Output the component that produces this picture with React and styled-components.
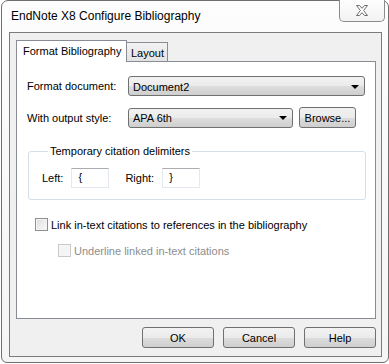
import React from 'react';
import styled, { createGlobalStyle } from 'styled-components';

const GlobalStyle = createGlobalStyle`
  html, body {
    margin: 0;
    padding: 0;
    background: #ffffff;
  }
  body {
    font-family: "Liberation Sans", Arial, sans-serif;
    font-size: 11px;
    color: #000;
  }
`;

const Window = styled.div`
  width: 386px;
  height: 361px;
  margin-left: 1px;
  border: 1px solid #6f6f6f;
  border-radius: 7px 7px 6px 6px;
  background: linear-gradient(#fdfdfd, #f5f5f5);
  display: flex;
  flex-direction: column;
  box-sizing: content-box;
`;

const TitleBar = styled.div`
  height: 31px;
  display: flex;
  justify-content: space-between;
  align-items: flex-start;
  padding: 0 3px 0 9px;
`;

const Title = styled.div`
  font-size: 12px;
  line-height: 31px;
`;

const CloseButton = styled.div`
  width: 44px;
  height: 21px;
  margin-top: -1px;
  border: 1px solid #8c8c8c;
  border-top: none;
  border-radius: 0 0 5px 5px;
  background: linear-gradient(#fefefe, #f2f2f2);
  display: flex;
  align-items: center;
  justify-content: center;
`;

const Client = styled.div`
  flex: 1;
  margin: 0 6px 5px 7px;
  border: 1px solid #7b7b7b;
  background: #f0f0f0;
  display: flex;
  flex-direction: column;
  padding: 7px 5px 8px 6px;
`;

const TabRow = styled.div`
  display: flex;
  align-items: flex-end;
  position: relative;
  z-index: 1;
  margin-bottom: -1px;
`;

const Tab = styled.div`
  box-sizing: border-box;
  border: 1px solid #898c95;
  border-bottom: ${(p) => (p.$active ? 'none' : '1px solid #898c95')};
  height: ${(p) => (p.$active ? '22px' : '20px')};
  width: ${(p) => (p.$active ? '111px' : '42px')};
  padding: ${(p) => (p.$active ? '4px 0 0 6px' : '4px 0 0 4px')};
  background: ${(p) => (p.$active ? '#ffffff' : 'linear-gradient(#f2f2f2, #e3e3e3)')};
  margin-left: ${(p) => (p.$active ? '0' : '-1px')};
  line-height: 13px;
  ${(p) => (p.$active ? '' : 'margin-top: 2px;')}
`;

const Panel = styled.div`
  flex: 1;
  border: 1px solid #898c95;
  background: #ffffff;
  padding: 14px 10px 0 10px;
`;

const FormGrid = styled.div`
  display: grid;
  grid-template-columns: 101px auto;
  row-gap: 11px;
  align-items: center;
`;

const ControlLine = styled.div`
  display: flex;
  align-items: center;
  gap: 6px;
`;

const Combo = styled.div`
  box-sizing: border-box;
  width: ${(p) => p.$width}px;
  height: 20px;
  border: 1px solid #707070;
  border-radius: 3px;
  background: linear-gradient(#f2f2f2 0%, #ebebeb 50%, #dddddd 51%, #cfcfcf 100%);
  display: flex;
  align-items: center;
  justify-content: space-between;
  padding: 1px 5px 0 4px;
`;

const Arrow = styled.span`
  width: 0;
  height: 0;
  border-left: 4px solid transparent;
  border-right: 4px solid transparent;
  border-top: 4px solid #000;
`;

const Button = styled.div`
  box-sizing: border-box;
  width: ${(p) => p.$width || 72}px;
  height: 21px;
  border: 1px solid #707070;
  border-radius: 3px;
  background: linear-gradient(#f2f2f2 0%, #ebebeb 50%, #dddddd 51%, #cfcfcf 100%);
  display: flex;
  align-items: center;
  justify-content: center;
  padding-top: 1px;
`;

const Group = styled.fieldset`
  margin: 17px 0 0 1px;
  width: 338px;
  box-sizing: border-box;
  border: 1px solid #d5dfe5;
  border-radius: 3px;
  padding: 11px 0 11px 13px;
  display: flex;
  align-items: center;
`;

const Legend = styled.legend`
  margin-left: 6px;
  padding: 0 2px;
  font-size: 11px;
`;

const DelimLabel = styled.span`
  margin-right: ${(p) => p.$gap}px;
`;

const TextBox = styled.div`
  box-sizing: border-box;
  width: 38px;
  height: 20px;
  border: 1px solid #e3e9ef;
  border-top-color: #abadb3;
  background: #fff;
  padding: 2px 0 0 6px;
  margin-right: ${(p) => p.$after || 0}px;
`;

const CheckRow = styled.div`
  display: flex;
  align-items: center;
  margin-left: ${(p) => p.$indent}px;
  margin-top: ${(p) => p.$top}px;
  color: ${(p) => (p.$disabled ? '#8d8d8d' : '#000')};
`;

const Box = styled.span`
  box-sizing: border-box;
  width: 13px;
  height: 13px;
  border: 1px solid ${(p) => (p.$disabled ? '#c8c8c8' : '#8e8f8f')};
  background: ${(p) =>
    p.$disabled
      ? '#f4f4f4'
      : 'linear-gradient(135deg, #dcdcdc, #fbfbfb)'};
  box-shadow: inset 0 0 0 1px ${(p) => (p.$disabled ? '#f7f7f7' : '#f4f4f4')};
  margin-right: 3px;
`;

const ButtonRow = styled.div`
  display: flex;
  justify-content: flex-end;
  gap: 9px;
  margin-top: 8px;
`;

const CloseGlyph = () => (
  <svg width="14" height="11" viewBox="0 0 14 11">
    <path
      d="M1.5 0.5 H4.5 L7 3.3 L9.5 0.5 H12.5 L8.6 5.5 L12.5 10.5 H9.5 L7 7.7 L4.5 10.5 H1.5 L5.4 5.5 Z"
      fill="#ffffff"
      stroke="#6d6d6d"
      strokeWidth="1"
      strokeLinejoin="round"
    />
  </svg>
);

export default function App() {
  return (
    <>
      <GlobalStyle />
      <Window>
        <TitleBar>
          <Title>EndNote X8 Configure Bibliography</Title>
          <CloseButton>
            <CloseGlyph />
          </CloseButton>
        </TitleBar>
        <Client>
          <TabRow>
            <Tab $active>Format Bibliography</Tab>
            <Tab>Layout</Tab>
          </TabRow>
          <Panel>
            <FormGrid>
              <span>Format document:</span>
              <Combo $width={237}>
                <span>Document2</span>
                <Arrow />
              </Combo>
              <span>With output style:</span>
              <ControlLine>
                <Combo $width={165}>
                  <span>APA 6th</span>
                  <Arrow />
                </Combo>
                <Button $width={57}>Browse...</Button>
              </ControlLine>
            </FormGrid>
            <Group>
              <Legend>Temporary citation delimiters</Legend>
              <DelimLabel $gap={8}>Left:</DelimLabel>
              <TextBox $after={16}>{'{'}</TextBox>
              <DelimLabel $gap={8}>Right:</DelimLabel>
              <TextBox>{'}'}</TextBox>
            </Group>
            <CheckRow $indent={8} $top={18}>
              <Box />
              <span>Link in-text citations to references in the bibliography</span>
            </CheckRow>
            <CheckRow $indent={31} $top={13} $disabled>
              <Box $disabled />
              <span>Underline linked in-text citations</span>
            </CheckRow>
          </Panel>
          <ButtonRow>
            <Button>OK</Button>
            <Button>Cancel</Button>
            <Button>Help</Button>
          </ButtonRow>
        </Client>
      </Window>
    </>
  );
}
